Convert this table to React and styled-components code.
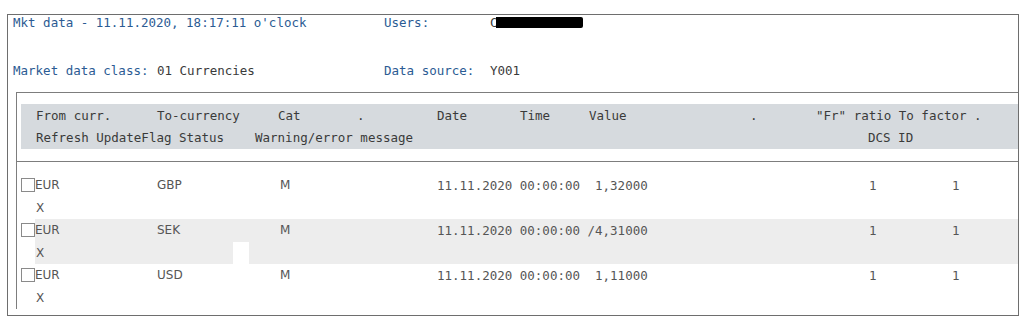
import React from 'react';
import styled, { createGlobalStyle } from 'styled-components';

const Global = createGlobalStyle`
  body {
    margin: 0;
    background: #fff;
  }
`;

const mono = `"DejaVu Sans Mono", "Liberation Mono", monospace`;

const Frame = styled.div`
  margin: 14px 0 0 7px;
  width: 1010px;
  height: 300px;
  border: 1px solid #6e6e6e;
  display: flex;
  flex-direction: column;
  font-family: ${mono};
  font-size: 12.5px;
`;

const Info = styled.div`
  display: grid;
  grid-template-rows: 15px 15px;
  row-gap: 33px;
  padding-left: 5px;
  margin-bottom: 14px;
`;

const InfoLine = styled.div`
  display: flex;
  align-items: center;
  line-height: 15px;
  white-space: pre;
`;

const Label = styled.span`
  color: #2b5b93;
  width: ${(p) => p.w}px;
  flex: none;
`;

const Value = styled.span`
  color: #3a3a3a;
  flex: none;
  width: ${(p) => (p.w ? `${p.w}px` : 'auto')};
`;

const Redacted = styled.span`
  display: inline-block;
  width: 87px;
  height: 11px;
  background: #000;
  border-radius: 0 2px 2px 0;
  margin-left: -2px;
`;

const Inner = styled.div`
  flex: 1;
  margin-left: 8px;
  margin-bottom: 7px;
  border-left: 1px solid #7d7d7d;
  border-top: 1px solid #7d7d7d;
  padding-top: 11px;
  display: flex;
  flex-direction: column;
`;

const Header = styled.div`
  margin-left: 4px;
  background: #d6dade;
  padding-left: 15px;
  color: #3a3a3a;
`;

const Line = styled.div`
  display: flex;
  align-items: center;
  height: 22.5px;
  white-space: pre;
`;

const Cell = styled.span`
  flex: none;
  width: ${(p) => (p.w ? `${p.w}px` : 'auto')};
  padding-left: ${(p) => p.indent || 0}px;
  font-family: ${(p) => (p.sans ? `"DejaVu Sans", "Liberation Sans", sans-serif` : mono)};
  font-size: ${(p) => (p.sans ? '12px' : '12.5px')};
`;

const Divider = styled.div`
  margin-top: 12px;
  border-top: 1px solid #7d7d7d;
  margin-bottom: 12px;
`;

const Row = styled.div`
  display: flex;
  color: #555;
`;

const CheckCol = styled.div`
  width: 14px;
  margin-left: 4px;
  padding-top: 4px;
`;

const Checkbox = styled.div`
  width: 12px;
  height: 12px;
  border: 1px solid #8a8a8a;
  background: #fff;
`;

const RowBody = styled.div`
  flex: 1;
  background: ${(p) => (p.alt ? '#ededed' : 'transparent')};
`;

const Notch = styled.span`
  flex: none;
  width: 16px;
  height: 100%;
  background: #fff;
`;

const rows = [
  { to: 'GBP', value: ' 1,32000' },
  { to: 'SEK', value: '/4,31000', alt: true },
  { to: 'USD', value: ' 1,11000' },
];

export default function App() {
  return (
    <>
      <Global />
      <Frame>
        <Info>
          <InfoLine>
            <Label w={371}>Mkt data - 11.11.2020, 18:17:11 o'clock</Label>
            <Label w={106}>Users:</Label>
            <Value>C</Value>
            <Redacted />
          </InfoLine>
          <InfoLine>
            <Label w={144}>Market data class:</Label>
            <Value w={227}>01 Currencies</Value>
            <Label w={106}>Data source:</Label>
            <Value>Y001</Value>
          </InfoLine>
        </Info>
        <Inner>
          <Header>
            <Line>
              <Cell w={121}>From curr.</Cell>
              <Cell w={121}>To-currency</Cell>
              <Cell w={79}>Cat</Cell>
              <Cell w={80}>.</Cell>
              <Cell w={83}>Date</Cell>
              <Cell w={69}>Time</Cell>
              <Cell w={161}>Value</Cell>
              <Cell w={66}>.</Cell>
              <Cell>"Fr" ratio To factor .</Cell>
            </Line>
            <Line>
              <Cell w={219}>Refresh UpdateFlag Status</Cell>
              <Cell w={613}>Warning/error message</Cell>
              <Cell>DCS ID</Cell>
            </Line>
          </Header>
          <Divider />
          {rows.map((r) => (
            <Row key={r.to}>
              <CheckCol>
                <Checkbox />
              </CheckCol>
              <RowBody alt={r.alt}>
                <Line>
                  <Cell sans w={122}>EUR</Cell>
                  <Cell sans w={123}>{r.to}</Cell>
                  <Cell sans w={157}>M</Cell>
                  <Cell w={432}>{`11.11.2020 00:00:00 ${r.value}`}</Cell>
                  <Cell w={83}>1</Cell>
                  <Cell>1</Cell>
                </Line>
                <Line>
                  <Cell sans w={197} indent={1}>X</Cell>
                  {r.alt && <Notch />}
                </Line>
              </RowBody>
            </Row>
          ))}
        </Inner>
      </Frame>
    </>
  );
}
